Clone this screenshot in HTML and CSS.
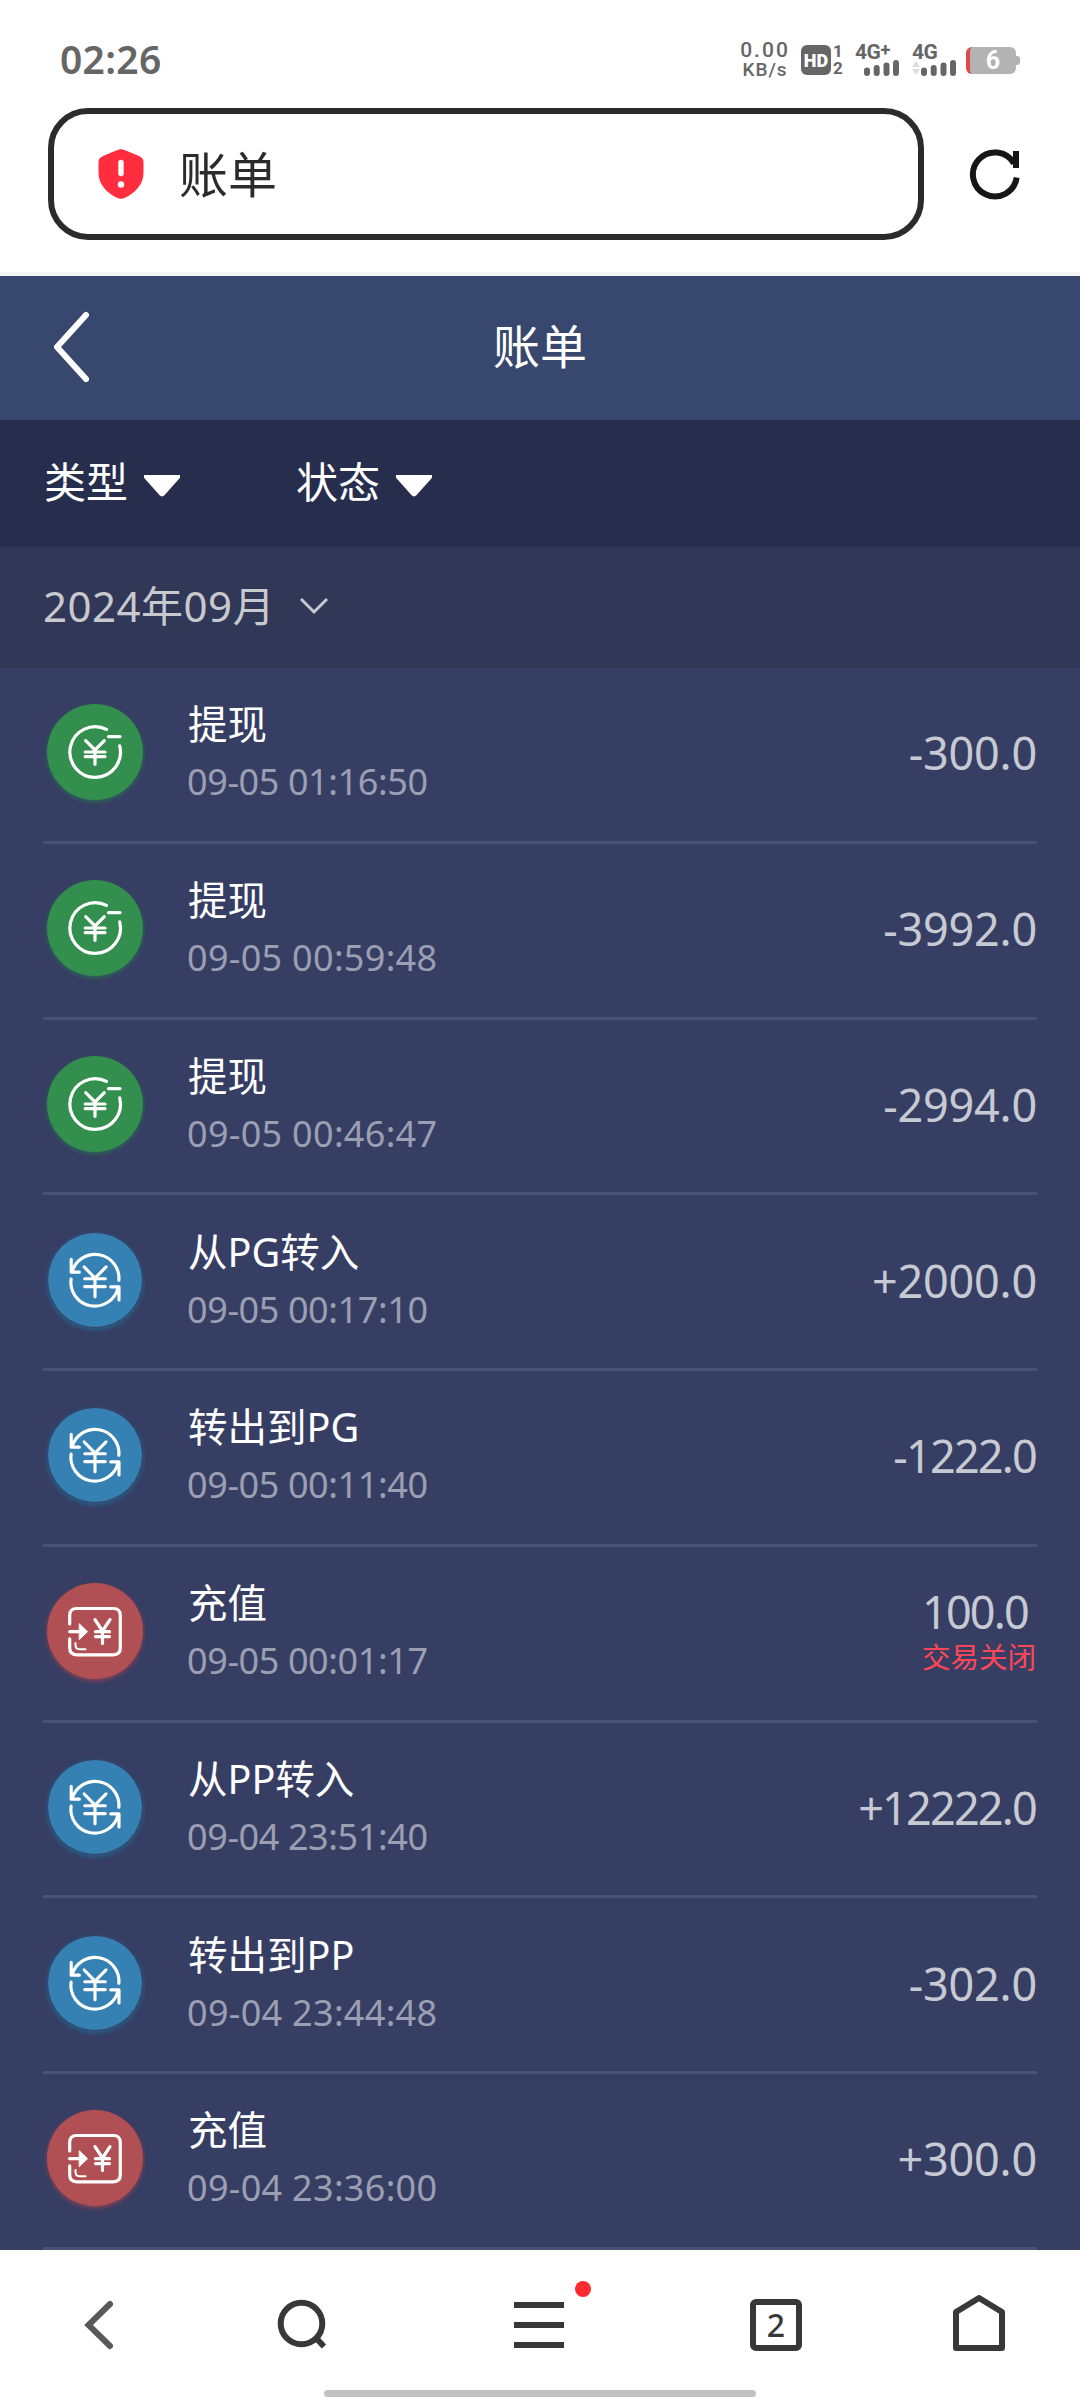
FILE: index.html
```html
<!DOCTYPE html>
<html lang="zh-CN">
<head>
  <meta charset="UTF-8">
  <title>账单</title>
  <link rel="stylesheet" href="styles.css">
</head>
<body>
  <svg class="sprite">
    <symbol id="icon-out" viewBox="-48 -48 96 96">
      <path d="M11.5 -22.6A25.3 25.3 0 1 0 24.7 -6.2M13.5 -15.3H25M-9.3 -11.3L0 -2L9.3 -11.3M0 -2V12.3M-9.8 0H10M-9.8 4.6H10"/>
    </symbol>
    <symbol id="icon-swap" viewBox="-48 -48 96 96">
      <path d="M24.4 .3A24.4 24.4 0 0 0 -23.5 -8M-24.3 -21.2V-8H-16M-24.4 -1A24.4 24.4 0 0 0 23.5 8M24.5 20.3V7H16M-11 -13.3L0 -2L11.3 -13.3M0 -2V17M-10.5 -1.3H10.5M-10.5 6.7H10.5"/>
    </symbol>
    <symbol id="icon-in" viewBox="-48 -48 96 96">
      <path d="M-25.3 -7V-15.5Q-25.3 -22.5 -18.3 -22.5H18.3Q25.3 -22.5 25.3 -15.5V16.8Q25.3 23.8 18.3 23.8H-18.3Q-25.3 23.8 -25.3 16.8V7.8M-25.3 .7H-12M0 -11.3L7.5 0L15 -11.3M7.5 0V12.5M.5 .7H14.5M.5 5.6H14.5"/>
      <path class="thin" d="M-19.5 12V14Q-19.5 18.2 -15.5 18.2H-9.5"/>
      <path class="solid" d="M-15.5 -7L-7.5 .7L-15.5 8.4Z"/>
    </symbol>
  </svg>

  <div class="status-bar">
    <span class="clock">02:26</span>
    <div class="status-right">
      <div class="speed"><b>0.00</b><span>KB/s</span></div>
      <div class="hd">HD</div>
      <div class="sim"><span>1</span><span>2</span></div>
      <div class="signal">
        <span class="net">4G<sup>+</sup></span>
        <svg class="bars" width="44" height="16" viewBox="0 0 44 16"><path d="M12 10.5V13M21.7 8V13M31.5 5.5V13M41 3V13"/></svg>
      </div>
      <div class="signal second">
        <span class="net">4G</span>
        <svg class="bars" width="44" height="16" viewBox="0 0 44 16"><path d="M12 10.5V13M21.7 8V13M31.5 5.5V13M41 3V13"/><path class="arrows" d="M0 7L4 1L8 7ZM0 9L4 15L8 9Z"/></svg>
      </div>
      <div class="battery">6</div>
    </div>
  </div>

  <div class="address-row">
    <div class="address">
      <svg width="46" height="50" viewBox="0 0 46 50">
        <path fill="#ff2d3d" d="M19.5 1Q23 -.5 26.5 1L41 7Q45.5 9 45.5 13V24C45.5 36 36.5 44 27.5 48.5Q23 51 18.5 48.5C9.5 44 .5 36 .5 24V13Q.5 9 5 7Z"/>
        <path stroke="#fff" stroke-width="5.4" stroke-linecap="round" d="M23 13.5V24.5"/>
        <circle cx="23" cy="35.5" r="3.2" fill="#fff"/>
      </svg>
      <span>账单</span>
    </div>
    <svg class="reload" width="52" height="52" viewBox="0 0 52 52">
      <path d="M47.7 29.5A22 22 0 1 1 45 15.5M47 3V20"/>
    </svg>
  </div>

  <header class="page-header">
    <svg width="36" height="72" viewBox="0 0 36 72"><path d="M33 4L4 36L33 68"/></svg>
    <h1>账单</h1>
  </header>

  <div class="filters">
    <div class="filter"><span>类型</span><i></i></div>
    <div class="filter"><span>状态</span><i></i></div>
  </div>

  <div class="month">
    <span>2024年09月</span>
    <svg width="30" height="18" viewBox="0 0 30 18"><path d="M2 2L15 15L28 2"/></svg>
  </div>

  <main class="bills">
    <div class="bill">
      <svg class="icon green"><use href="#icon-out"/></svg>
      <div class="info"><h2>提现</h2><time class="narrow">09-05 01:16:50</time></div>
      <div class="amount">-300.0</div>
    </div>
    <div class="bill">
      <svg class="icon green"><use href="#icon-out"/></svg>
      <div class="info"><h2>提现</h2><time>09-05 00:59:48</time></div>
      <div class="amount">-3992.0</div>
    </div>
    <div class="bill">
      <svg class="icon green"><use href="#icon-out"/></svg>
      <div class="info"><h2>提现</h2><time>09-05 00:46:47</time></div>
      <div class="amount">-2994.0</div>
    </div>
    <div class="bill">
      <svg class="icon blue"><use href="#icon-swap"/></svg>
      <div class="info"><h2>从PG转入</h2><time class="narrow">09-05 00:17:10</time></div>
      <div class="amount">+2000.0</div>
    </div>
    <div class="bill">
      <svg class="icon blue"><use href="#icon-swap"/></svg>
      <div class="info"><h2>转出到PG</h2><time class="narrow">09-05 00:11:40</time></div>
      <div class="amount narrow">-1222.0</div>
    </div>
    <div class="bill">
      <svg class="icon red"><use href="#icon-in"/></svg>
      <div class="info"><h2>充值</h2><time class="narrow">09-05 00:01:17</time></div>
      <div class="amount closed"><span class="narrow">100.0</span><small>交易关闭</small></div>
    </div>
    <div class="bill">
      <svg class="icon blue"><use href="#icon-swap"/></svg>
      <div class="info"><h2>从PP转入</h2><time class="narrow">09-04 23:51:40</time></div>
      <div class="amount narrow">+12222.0</div>
    </div>
    <div class="bill">
      <svg class="icon blue"><use href="#icon-swap"/></svg>
      <div class="info"><h2>转出到PP</h2><time>09-04 23:44:48</time></div>
      <div class="amount">-302.0</div>
    </div>
    <div class="bill">
      <svg class="icon red"><use href="#icon-in"/></svg>
      <div class="info"><h2>充值</h2><time>09-04 23:36:00</time></div>
      <div class="amount">+300.0</div>
    </div>
  </main>

  <nav class="toolbar">
    <svg class="back" width="60" height="60" viewBox="0 0 60 60"><path d="M40 9L18.5 30L40 51"/></svg>
    <svg class="search" width="60" height="60" viewBox="0 0 60 60"><circle cx="28.5" cy="28.5" r="20.8"/><path d="M43 43L51 51.5"/></svg>
    <div class="menu">
      <svg width="60" height="60" viewBox="0 0 60 60"><path d="M5 10H55M5 30H55M5 50H55"/></svg>
      <i class="dot"></i>
    </div>
    <div class="tabs">2</div>
    <svg class="home" width="60" height="60" viewBox="0 0 60 60"><path stroke-linejoin="round" d="M7 17L30 3L53 17V53H7Z"/></svg>
  </nav>
  <div class="home-bar"></div>
</body>
</html>
```

FILE: styles.css
```css
* {
  box-sizing: border-box;
}
body {
  width: 1080px;
  height: 2400px;
  margin: 0;
  overflow: hidden;
  background-color: #fff;
  font-family: "Noto Sans", "Noto Sans CJK SC", sans-serif;
}
svg {
  display: block;
  flex: none;
  fill: none;
}
.sprite {
  display: none;
}

/* status bar */
.status-bar {
  display: flex;
  align-items: center;
  justify-content: space-between;
  height: 108px;
  padding: 12px 60px 0 60px;
  color: #666;
}
.clock {
  padding-bottom: 3px;
  font-size: 39px;
  font-weight: 600;
  letter-spacing: 0.3px;
}
.status-right {
  display: flex;
  align-items: center;
  font-family: Roboto, sans-serif;
  font-weight: 700;
}
.speed {
  display: flex;
  flex-direction: column;
  align-items: center;
  width: 52px;
  margin-right: 10px;
  font-size: 19px;
  line-height: 19px;
  letter-spacing: 1px;
  white-space: nowrap;
}
.speed b {
  font-size: 21px;
  font-weight: 500;
  letter-spacing: 2px;
}
.speed span {
  font-weight: 500;
}
.hd {
  width: 30px;
  height: 30px;
  border-radius: 6px;
  background-color: #666;
  color: #fff;
  font-size: 18px;
  font-weight: 900;
  line-height: 31px;
  text-align: center;
}
.sim {
  display: flex;
  flex-direction: column;
  width: 14px;
  margin-right: 10px;
  padding-left: 2px;
  font-size: 17px;
  line-height: 17px;
}
.signal {
  width: 44px;
  height: 32px;
  margin-right: 13px;
}
.net {
  display: block;
  height: 16px;
  font-size: 21px;
  line-height: 16px;
  letter-spacing: -0.5px;
  white-space: nowrap;
}
.net sup {
  font-size: 18px;
  line-height: 0;
  vertical-align: 3px;
}
.bars {
  stroke: #666;
  stroke-width: 6;
  stroke-linecap: round;
}
.bars .arrows {
  fill: #ddd;
  stroke: none;
}
.signal.second {
  margin-right: 10px;
}
.battery {
  position: relative;
  width: 50px;
  height: 27px;
  margin-right: 4px;
  border-left: 4px solid #e34848;
  border-radius: 6px;
  background-color: #b3b3b3;
  color: #fff;
  font-size: 25px;
  line-height: 28px;
  text-align: center;
}
.battery::after {
  content: "";
  position: absolute;
  top: 9px;
  right: -4px;
  width: 4px;
  height: 9px;
  border-radius: 0 3px 3px 0;
  background-color: #b3b3b3;
}

/* address bar */
.address-row {
  display: flex;
  align-items: center;
  gap: 45px;
  height: 168px;
  padding: 0 0 32px 48px;
  border-bottom: 4px solid #f5f5f5;
}
.address {
  display: flex;
  align-items: center;
  gap: 35px;
  width: 876px;
  height: 132px;
  padding-left: 44px;
  border: 6px solid #2b2b2b;
  border-radius: 40px;
  color: #2b2b2b;
  font-size: 49px;
}
.address span {
  padding-bottom: 5px;
}
.reload {
  stroke: #161616;
  stroke-width: 6;
}

/* page */
.page-header {
  display: grid;
  grid-template-columns: 200px 1fr 200px;
  align-items: center;
  height: 144px;
  padding: 0 0 2px;
  background-color: #38476e;
  color: #fff;
}
.page-header svg {
  margin-left: 53px;
  stroke: #fff;
  stroke-width: 6;
  stroke-linecap: round;
  stroke-linejoin: round;
}
.page-header h1 {
  margin: 0;
  padding-bottom: 8px;
  font-size: 47px;
  font-weight: 400;
  text-align: center;
}
.filters {
  display: flex;
  gap: 116px;
  align-items: center;
  height: 127px;
  padding-left: 44px;
  background-color: #272e4d;
  color: #fff;
  font-size: 42px;
}
.filter {
  display: flex;
  align-items: center;
  gap: 16px;
}
.filter span {
  padding-bottom: 8px;
}
.filter i {
  width: 36px;
  height: 22px;
  margin-top: 4px;
  background-color: #fff;
  clip-path: polygon(0 0, 100% 0, 100% 15%, 56% 95%, 50% 100%, 44% 95%, 0 15%);
}
.month {
  display: flex;
  align-items: center;
  gap: 24px;
  height: 121px;
  padding-left: 43px;
  background-color: #303757;
  color: #c8c9cf;
  font-size: 42px;
  letter-spacing: 0.5px;
}
.month span {
  padding-bottom: 9px;
}
.month svg {
  margin-bottom: 4px;
  stroke: #c8c9cf;
  stroke-width: 3;
}

/* bill list */
.bills {
  height: 1582px;
  background-color: #373e64;
}
.bill {
  display: flex;
  align-items: center;
  height: 175.75px;
  margin: 0 43px;
  border-bottom: 3px solid #4a5179;
}
.icon {
  width: 96px;
  height: 96px;
  margin: 0 45px 4px 4px;
  border-radius: 50%;
  stroke: #fff;
  stroke-width: 3.2;
  stroke-linecap: round;
  stroke-linejoin: round;
}
.icon.green {
  background-color: #338f4e;
  box-shadow: 0 2px 4px #2b6a55;
}
.icon.blue {
  border: 1px solid #373e64;
  background-color: #3681b3;
  box-shadow: 0 2px 4px #256489;
}
.icon.red {
  background-color: #b05054;
  box-shadow: 0 2px 4px #8a4251;
}
.thin {
  stroke-width: 2;
}
.solid {
  fill: #fff;
  stroke-width: 1;
}
.info {
  flex: 1;
}
.info h2 {
  margin: -1px 0 0;
  color: #fff;
  font-size: 39.5px;
  font-weight: 400;
  line-height: 56px;
}
.info time {
  display: block;
  margin-left: -1px;
  color: #9c9fb2;
  font-size: 36px;
  line-height: 59px;
  letter-spacing: 0.3px;
}
.info time.narrow {
  letter-spacing: -0.4px;
}
.amount {
  padding-bottom: 3px;
  color: #c8cad3;
  font-size: 45px;
  letter-spacing: -0.2px;
  text-align: right;
}
.amount.narrow,
.amount .narrow {
  margin-right: 1px;
  letter-spacing: -1.8px;
}
.amount.closed {
  margin-right: 1px;
  line-height: 50px;
  letter-spacing: 0;
  text-align: left;
}
.amount small {
  display: block;
  color: #ff4757;
  font-size: 28.5px;
  line-height: 40px;
}

/* browser toolbar */
.toolbar {
  display: flex;
  align-items: center;
  height: 140px;
  padding: 10px 0 0 70px;
  color: #383838;
  stroke: #383838;
  stroke-width: 6;
}
.toolbar .back {
  stroke: #595959;
  stroke-linecap: round;
}
.search {
  margin-left: 143px;
}
.menu {
  position: relative;
  margin-left: 176px;
}
.dot {
  position: absolute;
  top: -14px;
  right: -22px;
  width: 16px;
  height: 16px;
  border-radius: 50%;
  background-color: #ff2a2f;
}
.tabs {
  width: 52px;
  height: 52px;
  margin-left: 181px;
  border: 6px solid #383838;
  border-radius: 6px;
  font-size: 32px;
  font-weight: 500;
  line-height: 39px;
  text-align: center;
}
.home {
  margin-left: 147px;
}
.home-bar {
  width: 432px;
  height: 7px;
  margin: 0 auto;
  border-radius: 4px;
  background-color: #c1c1c1;
}
```
